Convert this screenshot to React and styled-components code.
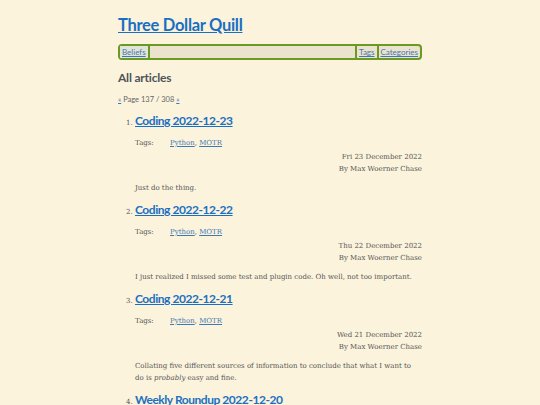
import React from "react";
import styled, { createGlobalStyle } from "styled-components";

const GlobalStyle = createGlobalStyle`
  html, body {
    margin: 0;
    padding: 0;
    background: #fbf3dc;
  }
  body {
    font-family: "DejaVu Serif", "Liberation Serif", serif;
    color: #555;
  }
`;

const Page = styled.div`
  width: 304px;
  margin: 0 auto;
  padding-top: 14px;
`;

const SiteTitle = styled.h1`
  margin: 0 0 8px;
  font-family: Lato, "Open Sans", sans-serif;
  font-size: 16.5px;
  font-weight: 700;
  letter-spacing: -0.3px;
  line-height: 22px;
  a {
    color: #1a6fc2;
  }
`;

const Nav = styled.nav`
  display: flex;
  align-items: stretch;
  border: 2px solid #6b9a22;
  border-radius: 4px;
  background: #ebe3cd;
  height: 12px;
  font-family: Lato, "Open Sans", sans-serif;
  font-size: 8px;
  line-height: 12px;
`;

const NavLink = styled.a`
  color: #3f78b4;
  padding: 0 2px;
  background: ${({ $first }) => ($first ? "#e3e4d8" : "transparent")};
  border-left: ${({ $first }) => ($first ? "none" : "2px solid #6b9a22")};
  border-right: ${({ $first }) => ($first ? "2px solid #6b9a22" : "none")};
`;

const Spacer = styled.div`
  flex: 1;
`;

const SectionTitle = styled.h2`
  margin: 10px 0 0;
  font-family: Lato, "Open Sans", sans-serif;
  font-size: 12px;
  font-weight: 700;
  letter-spacing: -0.2px;
  line-height: 16px;
  color: #4f5459;
`;

const Pager = styled.p`
  margin: 9px 0 0;
  font-family: Lato, "Open Sans", sans-serif;
  font-size: 7.5px;
  line-height: 10px;
  color: #666;
  a {
    color: #3f78b4;
  }
`;

const List = styled.ol`
  margin: 8px 0 0;
  padding-left: 17px;
  font-size: 7px;
  li::marker {
    font-size: 7px;
    color: #555;
  }
`;

const Item = styled.li`
  margin-bottom: 8px;
`;

const ItemTitle = styled.h3`
  display: inline;
  margin: 0;
  font-family: Lato, "Open Sans", sans-serif;
  font-size: 12px;
  font-weight: 700;
  letter-spacing: -0.45px;
  line-height: 16px;
  a {
    color: #1a6fc2;
  }
`;

const TagRow = styled.div`
  display: flex;
  margin-top: 9px;
  line-height: 10px;
`;

const TagLabel = styled.span`
  width: 35px;
`;

const TagLink = styled.a`
  color: #3f78b4;
`;

const Byline = styled.div`
  margin-top: 3px;
  text-align: right;
  line-height: 12px;
`;

const Summary = styled.p`
  margin: 7px 0 0;
  padding-right: 8px;
  line-height: 12px;
`;

const articles = [
  {
    title: "Coding 2022-12-23",
    date: "Fri 23 December 2022",
    summary: <>Just do the thing.</>,
  },
  {
    title: "Coding 2022-12-22",
    date: "Thu 22 December 2022",
    summary: <>I just realized I missed some test and plugin code. Oh well, not too important.</>,
  },
  {
    title: "Coding 2022-12-21",
    date: "Wed 21 December 2022",
    summary: (
      <>
        Collating five different sources of information to conclude that what I want to
        do is <em>probably</em> easy and fine.
      </>
    ),
  },
  {
    title: "Weekly Roundup 2022-12-20",
    date: "Tue 20 December 2022",
    summary: <>Nothing much.</>,
  },
];

export default function App() {
  return (
    <>
      <GlobalStyle />
      <Page>
        <SiteTitle>
          <a href="#">Three Dollar Quill</a>
        </SiteTitle>
        <Nav>
          <NavLink href="#" $first>Beliefs</NavLink>
          <Spacer />
          <NavLink href="#">Tags</NavLink>
          <NavLink href="#">Categories</NavLink>
        </Nav>
        <SectionTitle>All articles</SectionTitle>
        <Pager>
          <a href="#">«</a> Page 137 / 308 <a href="#">»</a>
        </Pager>
        <List>
          {articles.map((a) => (
            <Item key={a.title}>
              <ItemTitle>
                <a href="#">{a.title}</a>
              </ItemTitle>
              <TagRow>
                <TagLabel>Tags:</TagLabel>
                <span>
                  <TagLink href="#">Python</TagLink>, <TagLink href="#">MOTR</TagLink>
                </span>
              </TagRow>
              <Byline>
                {a.date}
                <br />
                By Max Woerner Chase
              </Byline>
              <Summary>{a.summary}</Summary>
            </Item>
          ))}
        </List>
      </Page>
    </>
  );
}
